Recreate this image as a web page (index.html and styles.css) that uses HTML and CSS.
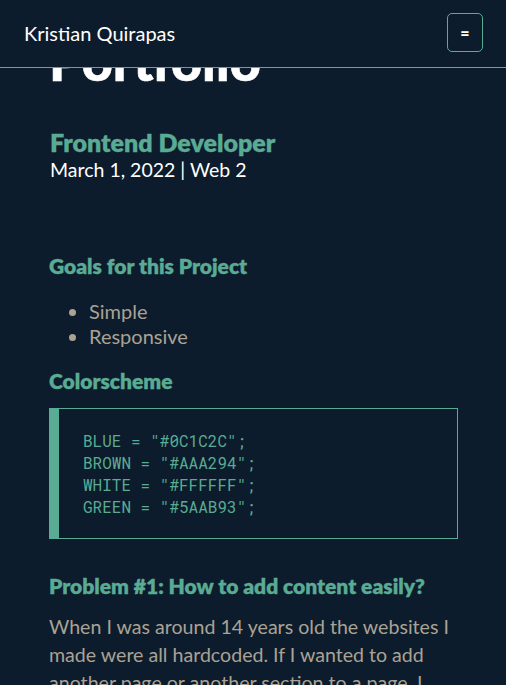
FILE: index.html
```html
<!DOCTYPE html>
<html lang="en">
<head>
<meta charset="utf-8">
<title>Portfolio | Kristian Quirapas</title>
<link rel="stylesheet" href="styles.css">
</head>
<body>
<header class="topbar">
  <a class="brand" href="#">Kristian Quirapas</a>
  <button class="menu-btn" type="button">=</button>
</header>
<main class="post">
  <h1 class="post-title">Portfolio</h1>
  <h2 class="post-role">Frontend Developer</h2>
  <p class="post-meta">March 1, 2022 | Web 2</p>

  <h3 class="section-title goals">Goals for this Project</h3>
  <ul class="goal-list">
    <li>Simple</li>
    <li>Responsive</li>
  </ul>

  <h3 class="section-title">Colorscheme</h3>
  <div class="code-box">
<pre class="code">BLUE = "#0C1C2C";
BROWN = "#AAA294";
WHITE = "#FFFFFF";
GREEN = "#5AAB93";</pre>
  </div>

  <h3 class="section-title problem">Problem #1: How to add content easily?</h3>
  <p class="body-text">When I was around 14 years old the websites I made were all hardcoded. If I wanted to add another page or another section to a page, I had to copy and paste everything by hand.</p>
</main>
</body>
</html>
```

FILE: styles.css
```css
html, body {
  margin: 0;
  padding: 0;
  background: #0c1c2c;
  overflow: hidden;
}
body {
  font-family: Lato, "Open Sans", sans-serif;
  color: #ffffff;
}
.topbar {
  position: fixed;
  top: 0;
  left: 0;
  width: calc(100% - 47px);
  height: 67px;
  background: #0c1c2c;
  border-bottom: 1px solid #5aab93;
  display: flex;
  align-items: center;
  justify-content: space-between;
  padding: 0 23px 0 24px;
  z-index: 10;
}
.brand {
  color: #ffffff;
  text-decoration: none;
  font-size: 20px;
  line-height: 1;
  margin-top: -1px;
}
.menu-btn {
  width: 36px;
  height: 39px;
  margin-top: -2px;
  border: 1px solid #5aab93;
  border-radius: 5px;
  background: transparent;
  color: #ffffff;
  font-family: Lato, sans-serif;
  font-weight: 900;
  font-size: 16px;
  padding: 0;
  line-height: 1;
}
.post {
  padding: 0 48px 0 49px;
  margin-top: 32px;
}
.post-title {
  margin: 0;
  font-weight: 900;
  font-size: 54px;
  line-height: 58px;
  -webkit-text-stroke: 0.6px #ffffff;
}
.post-role {
  margin: 0;
  padding-left: 1px;
  margin-top: 37px;
  color: #5aab93;
  font-weight: 800;
  font-size: 25px;
  line-height: 30px;
  -webkit-text-stroke: 0.3px #5aab93;
}
.post-meta {
  margin: 0;
  padding-left: 1px;
  font-size: 19.5px;
  line-height: 26px;
}
.section-title {
  margin: 0;
  color: #5aab93;
  font-weight: 800;
  font-size: 21px;
  line-height: 26px;
  -webkit-text-stroke: 0.3px #5aab93;
}
.goals {
  margin-top: 70px;
}
.goal-list {
  margin: 20px 0 0 0;
  padding-left: 40px;
  color: #aaa294;
  font-size: 20px;
  line-height: 25px;
}
.goal-list li::marker {
  color: #aaa294;
}
.goal-list + .section-title {
  margin-top: 19px;
}
.code-box {
  margin-top: 14px;
  border: 1px solid #5aab93;
  border-left: 10px solid #5aab93;
  padding: 21px 24px 20px 24px;
}
.code {
  margin: 0;
  font-family: "Roboto Mono", "DejaVu Sans Mono", "Liberation Mono", monospace;
  font-size: 16px;
  line-height: 22px;
  color: #5aab93;
}
.problem {
  margin-top: 34px;
}
.body-text {
  margin: 14px 0 0 0;
  color: #aaa294;
  font-size: 19.6px;
  line-height: 28px;
}
```
